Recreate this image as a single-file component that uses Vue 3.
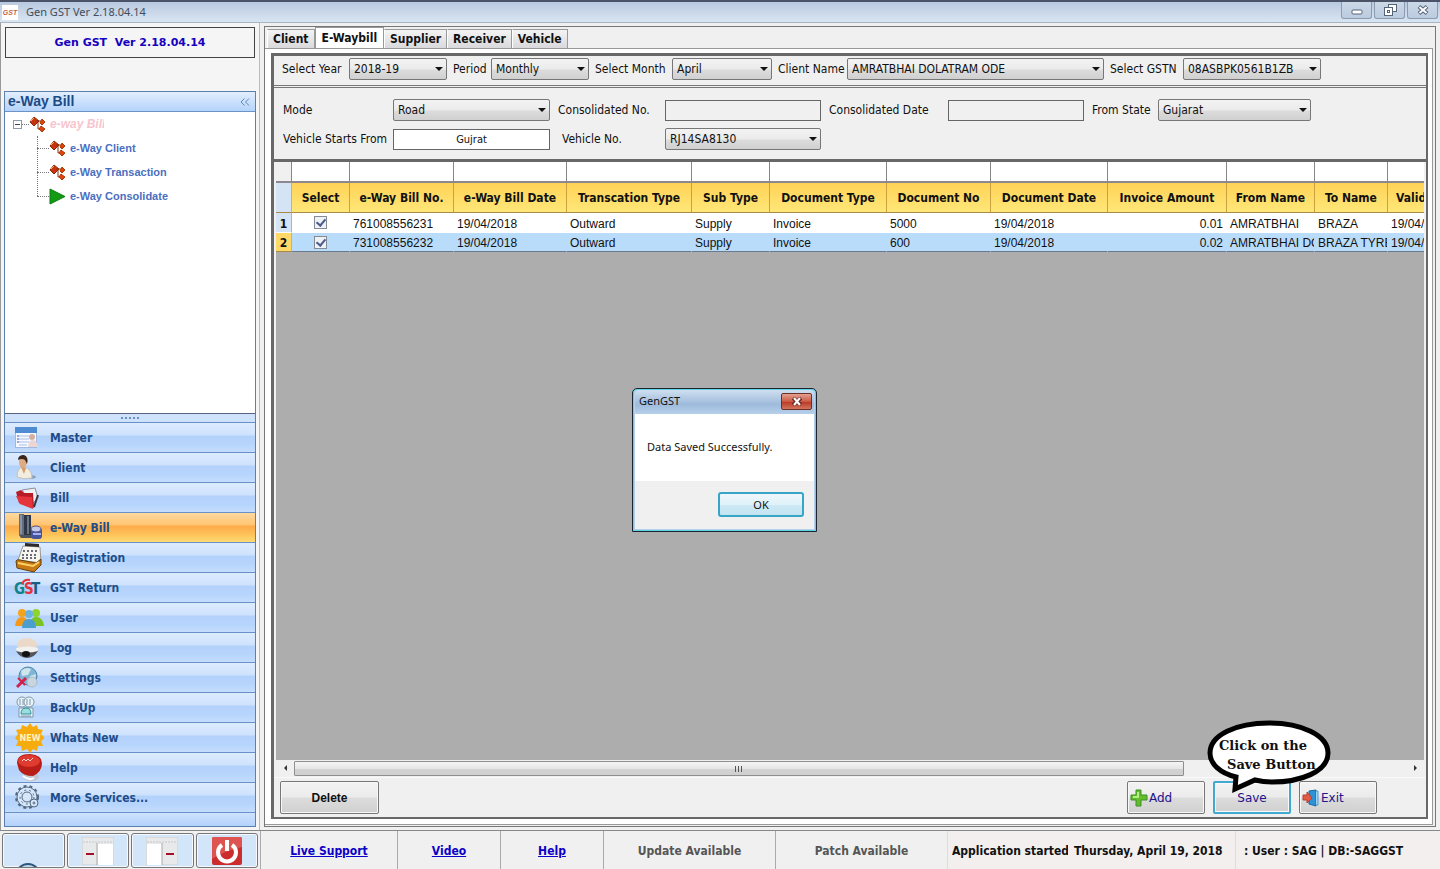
<script setup>
import { ref } from 'vue'

const navItems = ['Master', 'Client', 'Bill', 'e-Way Bill', 'Registration', 'GST Return', 'User', 'Log', 'Settings', 'BackUp', 'Whats New', 'Help', 'More Services...']
const activeNav = ref('e-Way Bill')
const tabs = ['Client', 'E-Waybill', 'Supplier', 'Receiver', 'Vehicle']
const activeTab = ref('E-Waybill')

const filters = [
  { id: 'year', label: 'Select Year', value: '2018-19', cls: 'w98' },
  { id: 'period', label: 'Period', value: 'Monthly', cls: 'w98' },
  { id: 'month', label: 'Select Month', value: 'April', cls: 'w100' },
  { id: 'client', label: 'Client Name', value: 'AMRATBHAI DOLATRAM ODE', cls: 'w257' },
  { id: 'gstn', label: 'Select GSTN', value: '08ASBPK0561B1ZB', cls: 'w138' }
]

const columns = ['Select', 'e-Way Bill No.', 'e-Way Bill Date', 'Transcation Type', 'Sub Type', 'Document Type', 'Document No', 'Document Date', 'Invoice Amount', 'From Name', 'To Name', 'Valid']
const rows = ref([
  { on: true, cells: ['761008556231', '19/04/2018', 'Outward', 'Supply', 'Invoice', '5000', '19/04/2018', '0.01', 'AMRATBHAI', 'BRAZA', '19/04/2018'] },
  { on: true, cells: ['731008556232', '19/04/2018', 'Outward', 'Supply', 'Invoice', '600', '19/04/2018', '0.02', 'AMRATBHAI DOLATRAM', 'BRAZA TYRES', '19/04/2018'] }
])
</script>

<template>
  <div class="app">
    <header class="titlebar">
      <span class="logo">GST</span>
      <h1>Gen GST Ver 2.18.04.14</h1>
      <div class="winbtns">
        <button aria-label="Minimize"><svg width="12" height="12"><rect x="1" y="6" width="10" height="4" rx="1" fill="#fff" stroke="#56647a" /></svg></button>
        <button aria-label="Restore"><svg width="14" height="14" fill="#fff" stroke="#56647a"><rect x="5.500" y="1.500" width="8" height="7" /><rect x="1.500" y="4.500" width="8" height="8" /><rect x="4.500" y="7.500" width="2" height="2" /></svg></button>
        <button aria-label="Close"><svg width="12" height="12"><path d="M2 2.500L10 9.500M10 2.500L2 9.500" stroke="#56647a" stroke-width="4" /><path d="M2.500 3L9.500 9M9.500 3L2.500 9" stroke="#fff" stroke-width="2" /></svg></button>
      </div>
    </header>

    <div class="body">
      <aside class="side">
        <div class="version">Gen GST&nbsp; Ver 2.18.04.14</div>
        <div class="panel">
          <div class="panel-head"><h2>e-Way Bill</h2><button aria-label="Collapse"><svg width="10" height="8" fill="none" stroke="#5f86bd"><path d="M4.500 0.500L1 4L4.500 7.500M9 0.500L5.500 4L9 7.500" /></svg></button></div>
          <div class="tree">
            <div class="root">
              <span class="minus"></span><span class="dots"></span>
              <svg class="ways" width="17" height="17" viewBox="0 0 17 17"><path d="M5 1L10 5L5 10L1 6Z" fill="#c8330c" stroke="#8f2a0c" /><path d="M7 5H13M9 5V13H13" stroke="#8c3010" fill="none" /><path d="M13 3L16 6L13 9L11 7ZM12 10L16 13L13 16L10 13Z" fill="#e0440a" stroke="#a1400e" /><path d="M2 5L5 2" stroke="#f5b25d" /></svg>
              <a href="#" class="rootname">e-way Bill</a>
            </div>
            <ul>
              <li v-for="(n, i) in ['e-Way Client', 'e-Way Transaction', 'e-Way Consolidate']" :key="n">
                <svg v-if="i < 2" class="ways" width="17" height="17" viewBox="0 0 17 17"><path d="M5 1L10 5L5 10L1 6Z" fill="#c8330c" stroke="#8f2a0c" /><path d="M7 5H13M9 5V13H13" stroke="#8c3010" fill="none" /><path d="M13 3L16 6L13 9L11 7ZM12 10L16 13L13 16L10 13Z" fill="#e0440a" stroke="#a1400e" /><path d="M2 5L5 2" stroke="#f5b25d" /></svg>
                <svg v-else class="ways" width="17" height="17" viewBox="0 0 17 17"><path d="M1 1L16 8.500L1 16Z" fill="#129a12" stroke="#0b7f10" /></svg>
                <a href="#">{{ n }}</a>
              </li>
            </ul>
          </div>
          <div class="grip"><i v-for="k in 5" :key="k"></i></div>
          <nav>
            <button v-for="n in navItems" :key="n" :class="{ active: n === activeNav }" @click="activeNav = n">
              <svg width="30" height="30" viewBox="0 0 30 30">
                <g v-if="n === 'Master'"><rect x="1.500" y="4.500" width="21" height="20" fill="#f6f9ff" stroke="#9fb8df" /><rect x="1" y="4" width="22" height="6" fill="#4f8bd2" /><path d="M5 13H15M5 16H15M5 19H15M5 22H13" stroke="#a9bce2" /><path d="M3 13H5M3 16H5M3 19H5" stroke="#9aa7dd" stroke-width="2" /><circle cx="18" cy="14" r="3" fill="#d4afa0" /><path d="M14 24Q15 16 19 17Q23 17 24 24Z" fill="#ecd6d5" /></g>
                <g v-else-if="n === 'Client'"><ellipse cx="15" cy="24" rx="7" ry="2" fill="#8ba0bd" /><path d="M3 24Q3 14 10 14Q18 16 18 25Q10 27 3 24Z" fill="#f1ede0" stroke="#c9c2b4" /><ellipse cx="9" cy="9" rx="4" ry="6" fill="#e0aa82" /><path d="M4 7Q4 2 10 2Q15 4 13 11L11 7Q8 5 4 7Z" fill="#38251b" /><path d="M7 14L10 21L12 15" fill="#d99a6a" /></g>
                <g v-else-if="n === 'Bill'"><path d="M8 7L21 5L24 15L18 21Z" fill="#eef0f4" stroke="#8d8d97" /><path d="M2 9L7 7L10 10L19 10L20 25L5 20Z" fill="#b81c27" /><path d="M2 13L18 14L19 26L6 21Z" fill="#e5343c" /><path d="M20 24L24 12" stroke="#36363f" stroke-width="2" /></g>
                <g v-else-if="n === 'e-Way Bill'"><path d="M5 1H10V22H5Z" fill="#626d80" /><path d="M10 2H17V22H10Z" fill="#2f3747" /><path d="M7 2V21M14 3V21" stroke="#a8b6cc" stroke-width="1" /><path d="M5 22H24V25H7Z" fill="#50545d" /><rect x="17" y="15" width="11" height="11" rx="3" fill="#46549f" /><ellipse cx="22" cy="16" rx="5" ry="3" fill="#c5c9e6" stroke="#4c568c" /><path d="M19 21H27" stroke="#a4b1ee" stroke-width="2" /></g>
                <g v-else-if="n === 'Registration'"><path d="M9 3L26 4L27 20L4 17Z" fill="#f6f5f0" stroke="#9a9892" /><path d="M11 0L25 1L25 4L11 3Z" fill="#2a2a2d" /><path d="M9 8H23M8 12H23M8 15H22" stroke="#6b6e78" stroke-width="2" stroke-dasharray="2 2" /><path d="M2 18Q3 16 6 17L22 20L27 16V22L20 29L3 25Z" fill="#c77912" stroke="#68400d" /><path d="M4 20L19 23L25 19" fill="none" stroke="#ffd066" stroke-width="2" /></g>
                <g v-else-if="n === 'GST Return'" class="gst"><text x="0" y="21" fill="#12828c">G</text><text x="10" y="21" fill="#e0333f">S</text><text x="17" y="21" fill="#175e81">T</text><path d="M8 11Q10 6 16 7" fill="none" stroke="#e0333f" stroke-width="2" /></g>
                <g v-else-if="n === 'User'"><circle cx="8" cy="10" r="4" fill="#f5a31c" /><path d="M1 23Q2 14 8 14Q14 14 14 23Z" fill="#f49a18" /><circle cx="22" cy="10" r="4" fill="#8fd32d" /><path d="M16 23Q16 14 22 14Q29 14 30 23Z" fill="#7cc324" /><circle cx="15" cy="11" r="4" fill="#67b3e2" /><path d="M8 25Q8 16 15 16Q22 16 22 25Z" fill="#4a9fd0" /></g>
                <g v-else-if="n === 'Log'"><ellipse cx="13" cy="12" rx="10" ry="7" fill="#ead9c8" /><path d="M2 15Q13 12 24 15L23 19Q13 25 3 19Z" fill="#f1f1f0" /><path d="M2 18Q13 21 24 18Q20 25 13 25Q6 25 2 18Z" fill="#54545b" /><ellipse cx="12" cy="21" rx="4" ry="3" fill="#111" /></g>
                <g v-else-if="n === 'Settings'"><circle cx="14" cy="13" r="9" fill="#7fb6d6" stroke="#4f82aa" /><path d="M7 8Q12 3 17 6L14 12L8 13ZM16 13L22 11L21 18L16 20Z" fill="#cfe5ec" /><path d="M3 24L12 15" stroke="#d0234d" stroke-width="3" /><path d="M4 15L11 22" stroke="#d0234d" stroke-width="2" /><circle cx="18" cy="19" r="5" fill="#c9d6dd" stroke="#a9bbc6" /></g>
                <g v-else-if="n === 'BackUp'" fill="#e9f4fa" stroke="#7f97a8"><circle cx="8" cy="9" r="5" /><circle cx="15" cy="9" r="5" /><path d="M6 6V12M9 6V12M13 6V12M16 6V12" /><path d="M5 15V24H19V15Z" /><path d="M7 21Q7 15 12 15Q17 15 17 21Z" fill="#9adfe0" stroke="#318f99" /><path d="M7 23H17" /></g>
                <g v-else-if="n === 'Whats New'"><path d="M16 0L19 4L23 2L24 6L29 7L27 11L31 15L27 18L29 23L24 23L23 28L19 26L16 30L13 26L8 28L7 23L2 23L4 18L1 15L4 11L2 7L7 6L8 2L13 4Z" fill="#f6ac0f" /><text x="16" y="18" text-anchor="middle" font-family="DejaVu Sans" font-weight="700" font-size="8" fill="#fff3bd">NEW</text></g>
                <g v-else-if="n === 'Help'"><ellipse cx="17" cy="24" rx="8" ry="4" fill="#c3c5ce" /><path d="M3 10Q3 1 16 1Q28 2 28 10Q28 19 19 23Q9 23 5 17Z" fill="#b91d18" /><ellipse cx="15" cy="8" rx="11" ry="6" fill="#df3b30" /><path d="M8 8L10 6L12 8L14 6L16 8L19 5" fill="none" stroke="#fbd6d1" stroke-width="1" /><path d="M9 23Q15 28 20 25" fill="none" stroke="#fff" stroke-width="2" /></g>
                <g v-else fill="none" stroke="#53697f"><circle cx="13" cy="14" r="11" stroke-width="2" stroke-dasharray="3 3" /><circle cx="13" cy="14" r="10" fill="#d6e6fb" /><circle cx="13" cy="14" r="5" /><circle cx="13" cy="14" r="7" stroke-dasharray="2 3" /><circle cx="20" cy="20" r="4" fill="#d6e6fb" /><circle cx="20" cy="20" r="1" /></g>
              </svg>
              <span>{{ n }}</span>
            </button>
            <div class="rest"></div>
          </nav>
        </div>
      </aside>

      <main class="main">
        <div class="tabs">
          <button v-for="t in tabs" :key="t" :class="{ on: t === activeTab }" @click="activeTab = t">{{ t }}</button>
        </div>
        <div class="page">
          <div class="frame">
            <form class="filters" @submit.prevent>
              <template v-for="f in filters" :key="f.id">
                <label :for="f.id">{{ f.label }}</label>
                <span class="sel" :class="f.cls"><select :id="f.id"><option>{{ f.value }}</option></select></span>
              </template>
            </form>
            <form class="details" @submit.prevent>
              <label for="mode">Mode</label>
              <span class="sel"><select id="mode"><option>Road</option></select></span>
              <label for="cno">Consolidated No.</label>
              <input id="cno" type="text" class="off">
              <label for="cdate">Consolidated Date</label>
              <input id="cdate" type="text" class="off">
              <label for="state">From State</label>
              <span class="sel"><select id="state"><option>Gujarat</option></select></span>
              <label for="start">Vehicle Starts From</label>
              <input id="start" type="text" value="Gujrat">
              <label for="vno" class="vno">Vehicle No.</label>
              <span class="sel"><select id="vno"><option>RJ14SA8130</option></select></span>
            </form>

            <div class="gridwrap">
              <table>
                <colgroup>
                  <col class="c0"><col class="c1"><col class="c2"><col class="c3"><col class="c4"><col class="c5"><col class="c6"><col class="c7"><col class="c8"><col class="c9"><col class="c10"><col class="c11"><col class="c12">
                </colgroup>
                <thead>
                  <tr class="blank"><td v-for="k in 13" :key="k"></td></tr>
                  <tr class="heads"><th></th><th v-for="c in columns" :key="c" :class="{ last: c === 'Valid' }">{{ c }}</th></tr>
                </thead>
                <tbody>
                  <tr v-for="(r, i) in rows" :key="i" :class="{ picked: i === 1 }">
                    <th>{{ i + 1 }}</th>
                    <td class="tick"><input v-model="r.on" type="checkbox" :aria-label="'Select row ' + (i + 1)"></td>
                    <td v-for="(c, j) in r.cells" :key="j" :class="{ num: j === 7 }">{{ c }}</td>
                  </tr>
                </tbody>
              </table>
            </div>
            <div class="hscroll">
              <button aria-label="Scroll left"><svg width="5" height="7"><path d="M4 0L1 3L4 6Z" fill="#333" /></svg></button>
              <div class="track"><div class="thumb"><i></i><i></i><i></i></div></div>
              <button aria-label="Scroll right"><svg width="5" height="7"><path d="M1 0L4 3L1 6Z" fill="#333" /></svg></button>
            </div>
            <footer class="actions">
              <button class="delete">Delete</button>
              <button class="act"><svg width="18" height="18" viewBox="0 0 18 18"><path d="M6 1H11V6H17V11H11V17H6V11H1V6H6Z" fill="#62bd2c" stroke="#3f8f25" /><path d="M8 3V8H3" fill="none" stroke="#b9ee86" stroke-width="2" /></svg>Add</button>
              <div class="savebox">
                <button class="act save">Save</button>
                <div class="balloon">
                  <svg width="126" height="76" viewBox="0 0 126 76"><path d="M63 3C95 3 122 15 122 33C122 52 94 62 66 62C58 62 53 61 49 60L29 69L30 57C14 53 4 44 4 33C4 15 30 3 63 3Z" fill="#fff" stroke="#000" stroke-width="5" /></svg>
                  <p>Click on the<br><span>Save Button</span></p>
                </div>
              </div>
              <button class="act"><svg width="18" height="18" viewBox="0 0 18 18"><path d="M7 2L14 1V17L7 15Z" fill="#2f92d6" stroke="#1768a4" /><path d="M14 2H16V16H14" fill="#9fd4f3" stroke="#4c9ccb" /><path d="M1 6H5V3L10 9L5 14V11H1Z" fill="#e45b45" stroke="#b73f35" /></svg>Exit</button>
            </footer>
          </div>
        </div>
      </main>
    </div>

    <footer class="status">
      <div class="tools">
        <button aria-label="Start"><svg width="46" height="33"><circle cx="18" cy="42" r="12" fill="#bcd9ee" stroke="#31567c" stroke-width="2" /></svg></button>
        <button aria-label="Hide left panel"><svg width="32" height="28"><rect width="32" height="28" fill="#e8e9ea" stroke="#c9cbcd" /><rect x="16" y="7" width="15" height="21" fill="#fff" /><path d="M1 5H31" stroke="#c4c7ca" stroke-dasharray="2 1" /><path d="M15 6V28" stroke="#aaa" /><path d="M4 17H12" stroke="#a61026" stroke-width="2" /></svg></button>
        <button aria-label="Hide right panel"><svg width="32" height="28"><rect width="32" height="28" fill="#e8e9ea" stroke="#c9cbcd" /><rect x="1" y="7" width="15" height="21" fill="#fff" /><path d="M1 5H31" stroke="#c4c7ca" stroke-dasharray="2 1" /><path d="M16 6V28" stroke="#aaa" /><path d="M20 17H28" stroke="#a61026" stroke-width="2" /></svg></button>
        <button aria-label="Power"><svg width="30" height="28"><rect width="30" height="28" rx="2" fill="#cb2c2c" /><path d="M0 2Q0 0 2 0H28Q30 0 30 2V10Q12 14 0 22Z" fill="#de5450" /><path d="M10 8A9 9 0 1 0 20 8" fill="none" stroke="#fff" stroke-width="4" /><path d="M15 3V14" stroke="#fff" stroke-width="4" /></svg></button>
      </div>
      <div class="s1"><a href="#">Live Support</a></div>
      <div class="s2"><a href="#">Video</a></div>
      <div class="s2"><a href="#">Help</a></div>
      <div class="s3">Update Available</div>
      <div class="s3">Patch Available</div>
      <div class="s4">Application started</div>
      <div class="s5">Thursday, April 19, 2018</div>
      <div class="s6">: User : SAG | DB:-SAGGST</div>
    </footer>

    <section class="dialog" role="dialog" aria-label="GenGST">
      <header><h2>GenGST</h2><button aria-label="Close"><svg width="10" height="9"><path d="M1 1L9 8M9 1L1 8" stroke="#6b2b24" stroke-width="4" /><path d="M2 1L8 8M8 1L2 8" stroke="#fff" stroke-width="2" /></svg></button></header>
      <p>Data Saved Successfully.</p>
      <div class="foot"><button>OK</button></div>
    </section>
  </div>
</template>

<style>
body { margin: 0; overflow: hidden; }
</style>

<style scoped>
* { box-sizing: border-box; }
.app { position: relative; display: flex; flex-direction: column; height: 100vh; overflow: hidden; background: #f0f0f0; font: 12px/16px "DejaVu Sans Condensed", "DejaVu Sans", sans-serif; color: #111; }
button, input, select { font: inherit; color: inherit; margin: 0; padding: 0; }
h1, h2, p, ul { margin: 0; padding: 0; }

.titlebar { display: flex; align-items: center; height: 23px; padding-left: 2px; border-top: 2px solid #4b5368; border-bottom: 1px solid #a9b4c2; background: linear-gradient(#b9c9df, #d8e5f2); }
.logo { width: 16px; height: 15px; overflow: hidden; background: #fff; color: #d0633c; font: italic 700 7px/15px "Liberation Sans", sans-serif; text-align: center; }
.titlebar h1 { flex: 1; margin-left: 8px; font: 11px/18px "Noto Sans", sans-serif; color: #444d5a; }
.winbtns { display: flex; align-self: flex-start; gap: 2px; padding-right: 2px; }
.winbtns button { display: grid; place-items: center; width: 31px; height: 17px; border: 1px solid #8c9bb0; border-top: 0; border-radius: 0 0 3px 3px; background: linear-gradient(#cbd8e8, #bccbdf); }

.body { flex: 1; display: flex; min-height: 0; }
.side { display: flex; flex-direction: column; width: 260px; padding: 4px 3px 3px; border-right: 1px solid #bbb; border-left: 1px solid #999; background: #f5f5f5; }
.version { margin: 0 1px 33px; height: 31px; border: 1px solid #444; font: 700 11px/30px "DejaVu Sans", sans-serif; text-align: center; color: #1500c0; }
.panel { flex: 1; display: flex; flex-direction: column; min-height: 0; border: 1px solid #5d7fb0; background: #fff; }
.panel-head { display: flex; align-items: center; justify-content: space-between; height: 20px; padding: 0 5px 0 3px; border-bottom: 1px solid #6b93c5; background: linear-gradient(#e2eefd, #b4d3fb); }
.panel-head h2 { font: 700 14px/19px "Liberation Sans", sans-serif; color: #1c4a85; }
.panel-head button { display: grid; border: 0; background: none; }
.tree { flex: 1; padding: 0 0 0 8px; font: 700 11px/24px "Liberation Sans", sans-serif; }
.root { display: flex; align-items: center; height: 24px; }
.minus { width: 9px; height: 9px; border: 1px solid #8d98a8; background: linear-gradient(#444, #444) center / 5px 1px no-repeat #fff; }
.dots { width: 7px; border-top: 1px dotted #777; }
.ways { margin: 0 4px 0 0; }
.tree a { color: #4b6fc0; text-decoration: none; }
.tree .rootname { width: 54px; overflow: hidden; white-space: nowrap; font-style: italic; color: #f8c5cd; font-size: 12px; }
ul { list-style: none; margin-left: 24px; position: relative; }
ul::before { content: ""; position: absolute; left: 0; top: 0; height: 60px; border-left: 1px dotted #777; }
li { display: flex; align-items: center; height: 24px; }
li::before { content: ""; width: 12px; border-top: 1px dotted #777; }
.grip { display: flex; justify-content: center; align-items: center; gap: 2px; height: 9px; border-top: 1px solid #5a6480; background: #cfe2fb; }
.grip i { width: 2px; height: 2px; background: #6d8fc4; }
nav button { display: flex; align-items: center; width: 100%; height: 30px; padding-left: 9px; border: 0; border-top: 1px solid #6a90c8; background: linear-gradient(#dcebfe 0, #cfe2fd 40%, #b3d2fb 46%, #b7d5fc 75%, #c5ddfd); font-weight: 700; font-size: 12px; color: #204d89; text-align: left; }
nav button svg { margin: 0 6px 0 0; }
.gst { font: 700 15px/16px "DejaVu Sans Condensed", "DejaVu Sans", sans-serif; }
nav button.active { background: linear-gradient(#ffd9a0 0, #ffc572 40%, #fdab4b 46%, #fdc35a 75%, #fedb75); }
.rest { height: 14px; border-top: 1px solid #6a90c8; background: linear-gradient(#cfe2fd, #b3d2fb); }

.main { flex: 1; display: flex; flex-direction: column; min-width: 0; margin: 3px 4px 3px 4px; border: 1px solid #777; background: #f0f0f0; }
.tabs { display: flex; align-items: flex-end; height: 21px; padding-left: 2px; }
.tabs button { height: 19px; padding: 0 5px; border: 1px solid #999; border-left-color: #fff; border-bottom: 0; background: linear-gradient(#f4f4f4, #d9d9dc); font-weight: 700; font-size: 12px; white-space: nowrap; color: #111; }
.tabs button.on { height: 21px; padding: 0 6px; border-left-color: #999; background: #fff; }
.page { flex: 1; display: flex; min-height: 0; padding: 4px 4px 5px 6px; border: 1px solid #999; border-left: 0; background: #fff; margin-right: 2px; margin-bottom: 1px; }
.frame { flex: 1; display: flex; flex-direction: column; min-width: 0; border: 2px solid #686868; border-top-width: 3px; border-left-width: 3px; background: #f0f0f0; }
.filters { display: grid; grid-template-columns: 67px 104px 38px 104px 77px 106px 69px 263px 73px 138px; align-items: center; height: 30px; padding: 0 0 3px 8px; border-bottom: 1px solid #777; }
.filters label { white-space: nowrap; }
.sel { position: relative; display: block; }
.sel::after { content: ""; position: absolute; right: 4px; top: 9px; border: 4px solid transparent; border-top-color: #111; border-bottom: 0; pointer-events: none; }
select { display: block; appearance: none; width: 100%; height: 22px; padding-left: 4px; border: 1px solid #777; border-radius: 2px; background: linear-gradient(#f3f3f3, #ebebeb 50%, #dcdcdc 55%, #d0d0d0); }
.w98 { width: 98px; }
.w100 { width: 100px; }
.w257 { width: 257px; }
.w138 { width: 138px; }
.details { display: grid; grid-template-columns: 110px 157px 115px 156px 127px 136px 74px 153px; grid-auto-rows: 22px; row-gap: 7px; align-items: center; height: 75px; margin-top: 1px; padding: 11px 0 0 9px; border-top: 1px solid #777; border-bottom: 3px solid #686868; }
.details label { white-space: nowrap; }
.details input + label, .details .sel + label { padding-left: 8px; }
.details .sel + label[for="start"] { padding-left: 0; }
.details input + .vno { padding-left: 12px; }
.details input { width: 100%; height: 21px; border: 1px solid #666; background: #fff; text-align: center; font-size: 11px; }
.details .off { background: #f0f0f0; }

.gridwrap { flex: 1; min-height: 0; overflow: hidden; margin: 0 2px 0 2px; background: #adadad; }
table { width: 1210px; table-layout: fixed; border-collapse: separate; border-spacing: 0; font: 11px/16px "Liberation Sans", sans-serif; }
.c0 { width: 16px; }
.c1 { width: 58px; }
.c2 { width: 104px; }
.c3 { width: 113px; }
.c4 { width: 125px; }
.c5 { width: 78px; }
.c6 { width: 117px; }
.c7 { width: 104px; }
.c8 { width: 117px; }
.c9 { width: 119px; }
.c10 { width: 88px; }
.c11 { width: 73px; }
.c12 { width: 98px; }
th, td { padding: 0 3px; overflow: hidden; white-space: nowrap; text-align: left; background: #fff; border-right: 1px solid transparent; }
.blank td { height: 21px; border-right-color: #888; border-bottom: 2px solid #8d8790; }
.blank td:first-child { background: #f0f0f0; }
.heads th { height: 30px; padding: 0; border-right: 1px solid #c9a23f; border-bottom: 1px solid #a68a45; background: linear-gradient(#ffd257, #ffe778); font: 700 12px/16px "DejaVu Sans Condensed", "DejaVu Sans", sans-serif; text-align: center; }
.heads th.last { padding-left: 8px; text-align: left; }
.heads th:first-child, tbody th { padding: 0; background: #d5e4f5; border-right-color: #9fb7d4; text-align: center; font: 700 12px/16px "DejaVu Sans Condensed", sans-serif; }
tbody td, tbody th { height: 20px; padding-top: 3px; border-bottom: 1px solid #fff; }
tbody td { font-size: 12px; }
.picked td { background: #b9dcfb; border-right-color: #b9dcfb; border-bottom-color: #687a90; }
.picked th { background: #ffd967; border-bottom-color: #a68a45; }
.picked td, .picked th { height: 19px; padding-top: 1px; }
td.num { text-align: right; }
tbody td.tick { padding: 0; text-align: center; }
td.tick input { display: block; appearance: none; width: 13px; height: 13px; margin: 0 auto; border: 1px solid #858b94; background: #eef1f5; position: relative; }
td.tick input:checked::after { content: ""; position: absolute; left: 3px; top: 0; width: 4px; height: 7px; border: solid #4c5a8e; border-width: 0 2px 2px 0; transform: rotate(40deg); }
.hscroll { display: flex; height: 17px; margin: 0 2px; background: #f0f0f0; }
.hscroll button { display: grid; place-items: center; width: 18px; border: 0; background: none; }
.track { flex: 1; display: flex; padding: 1px 0; }
.thumb { display: flex; align-items: center; justify-content: center; gap: 2px; width: 80%; border: 1px solid #8f8f8f; border-radius: 1px; background: linear-gradient(#f5f5f5, #e6e6e6 50%, #d3d3d3 55%, #d0d0d0); }
.thumb i { width: 1px; height: 6px; background: #555; }
.actions { display: flex; align-items: center; gap: 8px; height: 40px; padding: 0 49px 0 6px; border-top: 1px solid #fafafa; }
.actions button { height: 33px; border: 1px solid #777; border-radius: 2px; background: linear-gradient(#f3f3f3, #ebebeb 48%, #dcdcdc 52%, #d0d0d0); box-shadow: inset 0 0 0 1px #f8f8f8; }
.actions .delete { width: 99px; margin-right: auto; font: 700 12px/16px "Liberation Sans", sans-serif; }
.act { display: flex; align-items: center; gap: 1px; width: 78px; padding-left: 2px; font: 12px/16px "DejaVu Sans", sans-serif; color: #23138c; }
.actions .act { font: 12px/16px "DejaVu Sans", sans-serif; }
.actions .save { justify-content: center; padding-left: 0; border: 2px solid #3fa9cf; }
.savebox { position: relative; }
.balloon { position: absolute; left: -7px; bottom: 18px; width: 126px; height: 76px; }
.balloon svg { display: block; }
.balloon p { position: absolute; left: 13px; top: 16px; font: 700 13px/19px "DejaVu Serif", serif; white-space: nowrap; }
.balloon span { padding-left: 8px; }

.status { display: flex; height: 39px; border-top: 1px solid #888; background: #f3efee; font-weight: 700; font-size: 12px; line-height: 40px; text-align: center; white-space: nowrap; }
.tools { display: flex; gap: 2px; width: 260px; padding: 2px 2px 0; background: #f0f0f0; }
.tools button { display: grid; place-items: center; flex: 1; height: 35px; overflow: hidden; border: 1px solid #777; border-radius: 3px; background: #d3e5f8; box-shadow: inset 0 0 0 1px #f5f9fd; }
.status > div:not(.tools) { border-left: 1px solid #aaa; }
.status a { color: #0c00c8; }
.status .s1 { width: 137px; background: #f0f0f0; }
.status .s2 { width: 103px; background: #f0f0f0; }
.status .s3 { width: 172px; background: #f0f0f0; color: #555; }
.status .s4 { width: 121px; padding-left: 4px; overflow: hidden; text-align: left; border-left-color: #ddd !important; }
.status .s5 { width: 167px; padding-left: 6px; text-align: left; border: 0 !important; }
.status .s6 { flex: 1; padding-left: 8px; text-align: left; border-left-color: #ddd !important; }

.dialog { position: absolute; left: 632px; top: 388px; width: 185px; border: 1px solid #1a2530; border-radius: 5px 5px 0 0; padding: 0 2px 2px; background: #b5d2ec; box-shadow: inset 0 0 0 1px #5fd3e6; font: 12px/16px "Noto Sans", sans-serif; }
.dialog header { display: flex; justify-content: space-between; height: 24px; padding: 3px 2px 0 4px; border-radius: 4px 4px 0 0; background: linear-gradient(#cfdfef, #9ebbdc 60%, #b7d0ea); margin-top: 1px; }
.dialog h2 { font: 11px/16px "Noto Sans", sans-serif; }
.dialog header button { display: grid; place-items: center; width: 31px; height: 17px; border: 1px solid #6d2f2a; border-radius: 2px; background: linear-gradient(#e3a090, #cb5a44 50%, #b93724 52%, #d2745c); }
.dialog p { height: 67px; padding: 25px 0 0 12px; background: #fff; font-size: 11px; white-space: nowrap; }
.foot { display: flex; justify-content: flex-end; height: 48px; padding: 11px 10px 0 0; background: #f0f0f0; }
.foot button { width: 86px; height: 25px; border: 2px solid #37a5c5; border-radius: 3px; background: linear-gradient(#eef7fb, #dff1f9 50%, #cde9f5 52%, #c4e4f1); font-size: 11px; }
</style>
